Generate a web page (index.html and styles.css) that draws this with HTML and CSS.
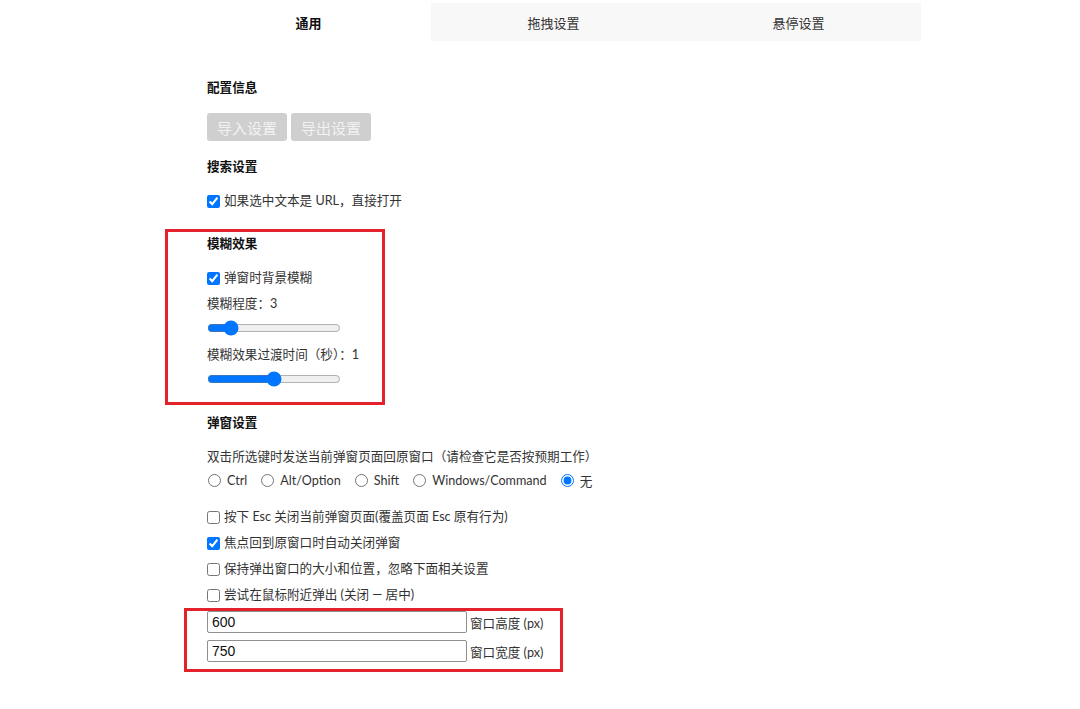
FILE: index.html
```html
<!DOCTYPE html>
<html lang="zh-CN">
<head>
    <meta charset="UTF-8">
    <meta name="viewport" content="width=device-width, initial-scale=1.0">
    <title>设置</title>
    <link rel="stylesheet" href="styles.css">
</head>
<body>
    <div class="page">
        <div class="tabs">
            <div class="tab active">通用</div>
            <div class="tab">拖拽设置</div>
            <div class="tab">悬停设置</div>
        </div>

        <div class="content">
            <h3 class="title first">配置信息</h3>
            <div class="buttons">
                <button type="button" class="btn" disabled>导入设置</button>
                <button type="button" class="btn" disabled>导出设置</button>
            </div>

            <h3 class="title">搜索设置</h3>
            <label class="row after-title"><input type="checkbox" checked>如果选中文本是 URL，直接打开</label>

            <div class="section marked-blur">
                <h3 class="title">模糊效果</h3>
                <label class="row after-title"><input type="checkbox" checked>弹窗时背景模糊</label>
                <div class="row label-line">模糊程度：3</div>
                <input type="range" class="slider" min="0" max="22" value="3">
                <div class="row label-line">模糊效果过渡时间（秒）：1</div>
                <input type="range" class="slider" min="0" max="2" step="0.1" value="1">
            </div>

            <h3 class="title popup">弹窗设置</h3>
            <div class="row after-title">双击所选键时发送当前弹窗页面回原窗口（请检查它是否按预期工作）</div>
            <div class="radios">
                <label><input type="radio" name="key">Ctrl</label>
                <label><input type="radio" name="key">Alt/Option</label>
                <label><input type="radio" name="key">Shift</label>
                <label><input type="radio" name="key">Windows/Command</label>
                <label><input type="radio" name="key" checked>无</label>
            </div>

            <div class="checks">
                <label class="row"><input type="checkbox">按下 Esc 关闭当前弹窗页面(覆盖页面 Esc 原有行为)</label>
                <label class="row"><input type="checkbox" checked>焦点回到原窗口时自动关闭弹窗</label>
                <label class="row"><input type="checkbox">保持弹出窗口的大小和位置，忽略下面相关设置</label>
                <label class="row"><input type="checkbox">尝试在鼠标附近弹出 (关闭 — 居中)</label>
            </div>

            <div class="sizes marked-size">
                <div class="size-row">
                    <input type="text" class="field" value="600">
                    <span>窗口高度 (px)</span>
                </div>
                <div class="size-row">
                    <input type="text" class="field" value="750">
                    <span>窗口宽度 (px)</span>
                </div>
            </div>
        </div>
    </div>
</body>
</html>
```

FILE: styles.css
```css
body {
    margin: 0;
    background-color: #ffffff;
    font-family: Lato, "Noto Sans CJK SC", sans-serif;
    font-size: 12.6px;
    color: #333;
}

.page {
    width: 735px;
    margin-left: 186px;
    padding-top: 3px;
    padding-bottom: 40px;
}

.tabs {
    display: flex;
    height: 38px;
    background-color: #f8f8f8;
    font-size: 13px;
}

.tab {
    flex: 1;
    display: flex;
    justify-content: center;
    align-items: center;
    color: #333;
}

.tab.active {
    background-color: #ffffff;
    font-weight: bold;
    color: #111;
}

.content {
    padding-left: 21px;
}

.title {
    margin: 23px 0 0 0;
    font-size: 12.6px;
    line-height: 20px;
    font-weight: bold;
    color: #111;
}

.title.first {
    margin-top: 37px;
}

.buttons {
    display: flex;
    gap: 4px;
    margin: 15px 0 16px 0;
}

.btn {
    height: 28px;
    padding: 0 10px;
    border: none;
    border-radius: 3px;
    background-color: #cfcfcf;
    color: #f2f2f2;
    font-family: Lato, "Noto Sans CJK SC", sans-serif;
    font-size: 15px;
}

.buttons + .title {
    margin-top: 0;
}

.row {
    display: flex;
    align-items: center;
    height: 20px;
    line-height: 20px;
}

.after-title {
    margin-top: 14px;
}

.row input[type="checkbox"] {
    width: 13px;
    height: 13px;
    margin: 0 4px 0 0;
}

.section {
    position: relative;
}

.label-line {
    margin-top: 6px;
}

.slider {
    display: block;
    width: 134px;
    height: 16px;
    margin: 6px 0 0 0;
}

.slider + .label-line {
    margin-top: 9px;
}

.title.popup {
    margin-top: 26px;
}

.radios {
    display: flex;
    gap: 13px;
    height: 20px;
    margin-top: 3px;
    align-items: center;
}

.radios label {
    display: flex;
    align-items: center;
}

.radios input {
    width: 13px;
    height: 13px;
    margin: 0 6px 0 1px;
}

.checks {
    display: flex;
    flex-direction: column;
    gap: 6px;
    margin-top: 17px;
}

.sizes {
    position: relative;
    display: flex;
    flex-direction: column;
    gap: 7px;
    margin-top: 6px;
}

.size-row {
    display: flex;
    align-items: center;
    gap: 3px;
}

.field {
    box-sizing: border-box;
    width: 260px;
    height: 22px;
    padding: 1px 4px;
    border: 1px solid #8f8f8f;
    border-radius: 2px;
    font-family: "Liberation Sans", Arial, sans-serif;
    font-size: 14px;
    color: #111;
}

/* red annotation frames over the screenshot */
.marked-blur::before,
.marked-size::before {
    content: "";
    position: absolute;
    border: 3px solid #e3222b;
    pointer-events: none;
}

.marked-blur::before {
    left: -42px;
    top: -5px;
    width: 214px;
    height: 170px;
}

.marked-size::before {
    left: -23px;
    top: -3px;
    width: 373px;
    height: 58px;
}
```
